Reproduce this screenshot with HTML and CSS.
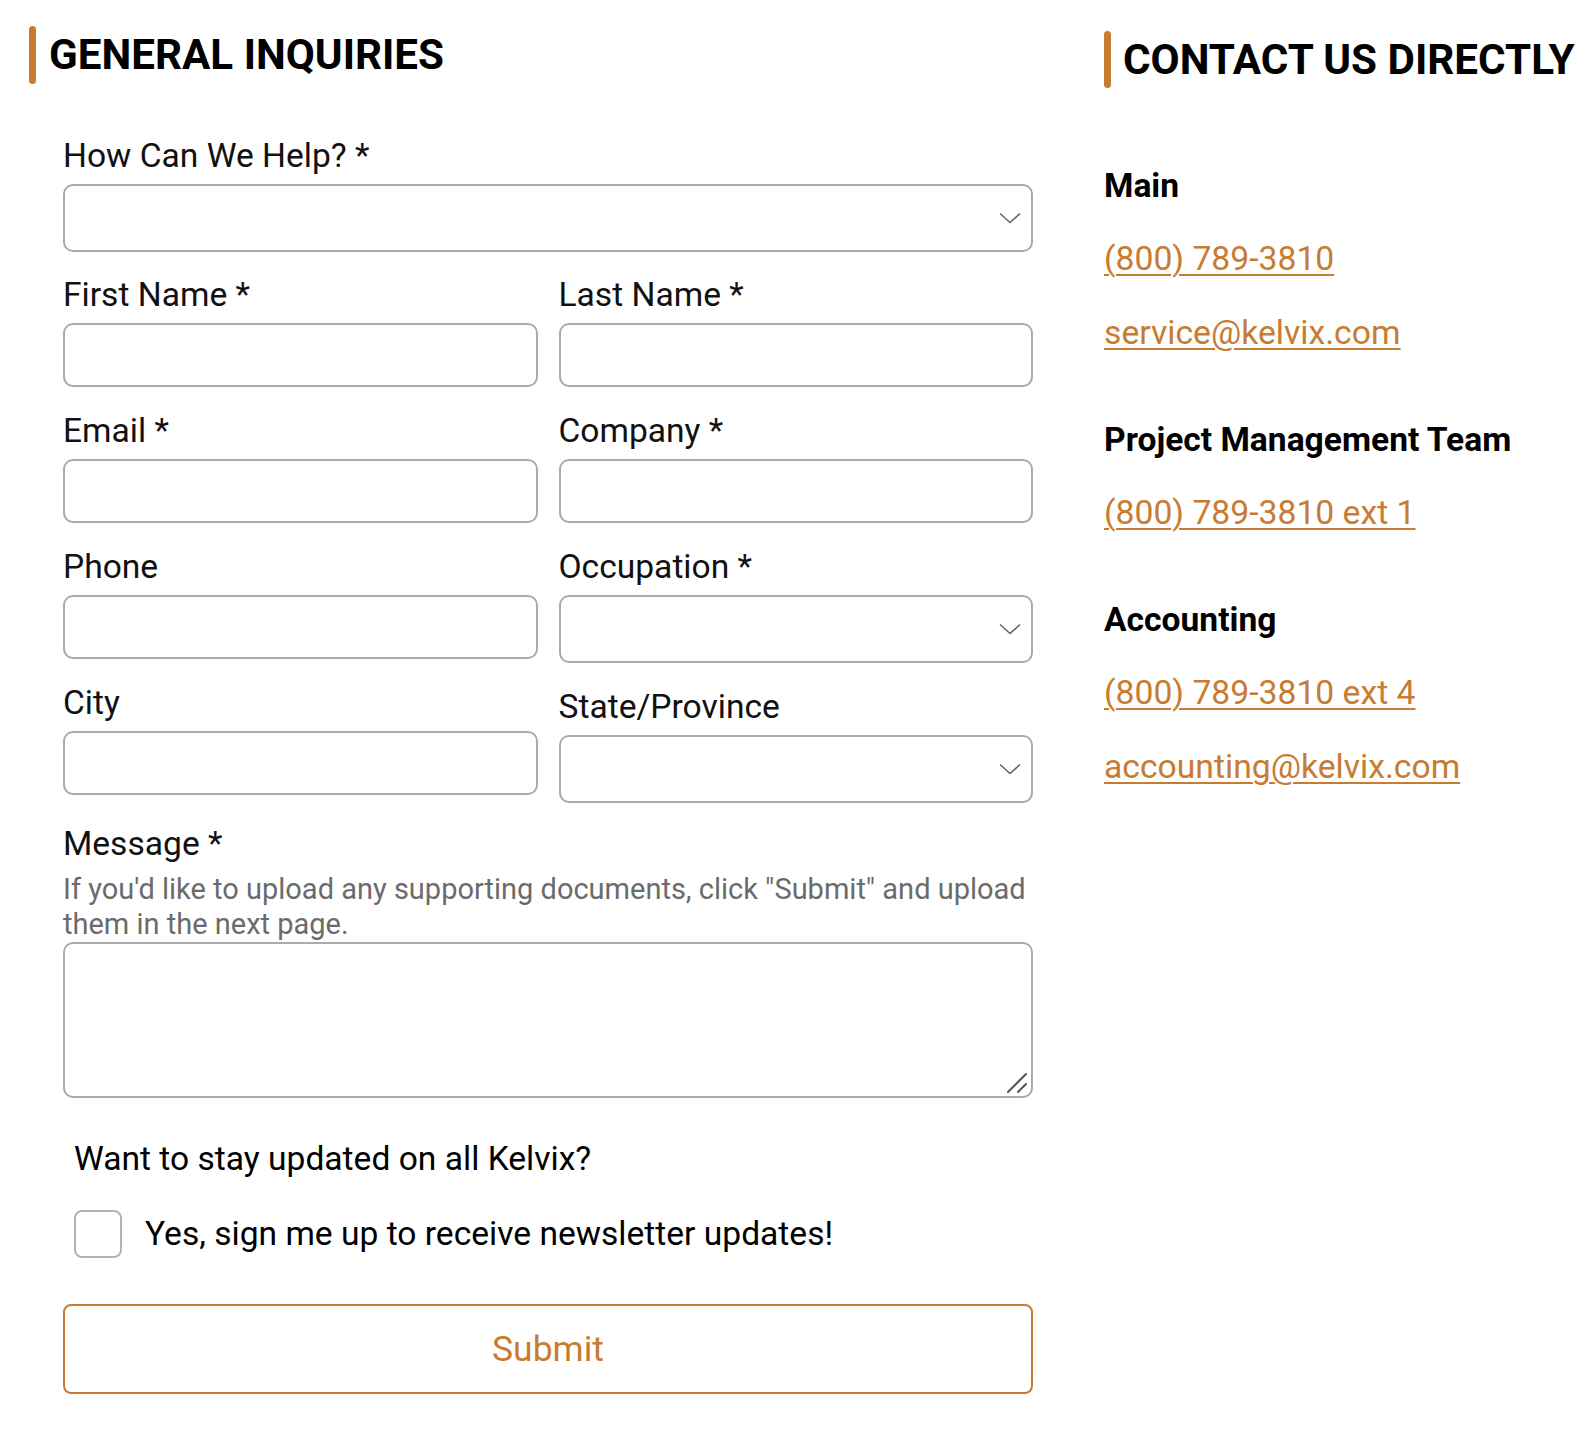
FILE: index.html
```html
<!DOCTYPE html>
<html lang="en">
<head>
<meta charset="utf-8">
<title>Contact Kelvix</title>
<link rel="stylesheet" href="styles.css">
</head>
<body>
<div class="page">
  <section class="inquiries">
    <h2 class="section-title"><span class="bar"></span><span>GENERAL INQUIRIES</span></h2>
    <form class="form">
      <div class="field">
        <label class="label">How Can We Help? *</label>
        <div class="select-wrap">
          <select class="select"><option></option></select>
          <svg class="chevron" width="22" height="12" viewBox="0 0 22 12"><path d="M1 1.5 L11 10.5 L21 1.5" fill="none" stroke="#666" stroke-width="1.6"/></svg>
        </div>
      </div>
      <div class="cols">
        <div class="col">
          <div class="field"><label class="label">First Name *</label><input class="input" type="text"></div>
          <div class="field"><label class="label">Email *</label><input class="input" type="text"></div>
          <div class="field"><label class="label">Phone</label><input class="input" type="text"></div>
          <div class="field"><label class="label">City</label><input class="input" type="text"></div>
        </div>
        <div class="col">
          <div class="field"><label class="label">Last Name *</label><input class="input" type="text"></div>
          <div class="field"><label class="label">Company *</label><input class="input" type="text"></div>
          <div class="field">
            <label class="label">Occupation *</label>
            <div class="select-wrap">
              <select class="select"><option></option></select>
              <svg class="chevron" width="22" height="12" viewBox="0 0 22 12"><path d="M1 1.5 L11 10.5 L21 1.5" fill="none" stroke="#666" stroke-width="1.6"/></svg>
            </div>
          </div>
          <div class="field">
            <label class="label">State/Province</label>
            <div class="select-wrap">
              <select class="select"><option></option></select>
              <svg class="chevron" width="22" height="12" viewBox="0 0 22 12"><path d="M1 1.5 L11 10.5 L21 1.5" fill="none" stroke="#666" stroke-width="1.6"/></svg>
            </div>
          </div>
        </div>
      </div>
      <div class="field message">
        <label class="label label-tight">Message *</label>
        <p class="hint">If you'd like to upload any supporting documents, click "Submit" and upload them in the next page.</p>
        <div class="textarea-wrap">
          <textarea class="textarea"></textarea>
          <svg class="resizer" width="22" height="22" viewBox="0 0 22 22"><path d="M2 20 L20 2 M12 20 L20 12" fill="none" stroke="#555" stroke-width="2" stroke-linecap="round"/></svg>
        </div>
      </div>
      <p class="newsletter-q">Want to stay updated on all Kelvix?</p>
      <label class="check-row"><input class="checkbox" type="checkbox"><span>Yes, sign me up to receive newsletter updates!</span></label>
      <button class="submit" type="button">Submit</button>
    </form>
  </section>
  <aside class="contact">
    <h2 class="section-title contact-title"><span class="bar"></span><span>CONTACT US DIRECTLY</span></h2>
    <div class="dept first">
      <h3 class="dept-name">Main</h3>
      <a class="link" href="#">(800) 789-3810</a>
      <a class="link" href="#">service@kelvix.com</a>
    </div>
    <div class="dept">
      <h3 class="dept-name">Project Management Team</h3>
      <a class="link" href="#">(800) 789-3810 ext 1</a>
    </div>
    <div class="dept">
      <h3 class="dept-name">Accounting</h3>
      <a class="link" href="#">(800) 789-3810 ext 4</a>
      <a class="link" href="#">accounting@kelvix.com</a>
    </div>
  </aside>
</div>
</body>
</html>
```
FILE: styles.css
```css
* { box-sizing: border-box; }
body {
  margin: 0;
  background: #fff;
  color: #000;
  font-family: Roboto, "Liberation Sans", Arial, sans-serif;
}
.page {
  display: flex;
  align-items: flex-start;
}
.inquiries {
  width: 1033px;
  padding-left: 29px;
  padding-top: 26px;
}
.section-title {
  margin: 0;
  display: flex;
  align-items: center;
  gap: 13px;
  height: 58px;
  font-size: 42.2px;
  line-height: 58px;
  font-weight: 700;
  color: #000;
}
.bar {
  width: 7px;
  height: 58px;
  background: #c77c32;
  border-radius: 4px;
  flex: none;
}
.form {
  margin-left: 34px;
  width: 970px;
  margin-top: 52px;
  display: flex;
  flex-direction: column;
}
.field {
  display: flex;
  flex-direction: column;
}
.label {
  font-size: 33.6px;
  line-height: 40px;
  margin-bottom: 8px;
  color: #111;
}
.input {
  height: 64px;
  border: 2px solid #ababab;
  border-radius: 10px;
  background: #fff;
  font: inherit;
  width: 100%;
}
.select-wrap {
  position: relative;
  height: 68px;
}
.select {
  appearance: none;
  -webkit-appearance: none;
  width: 100%;
  height: 68px;
  border: 2px solid #ababab;
  border-radius: 10px;
  background: #fff;
  font: inherit;
}
.chevron {
  position: absolute;
  right: 12px;
  top: 28px;
  pointer-events: none;
}
.cols {
  display: grid;
  grid-template-columns: 1fr 1fr;
  column-gap: 21px;
  margin-top: 23px;
  align-items: start;
}
.col {
  display: flex;
  flex-direction: column;
  gap: 24px;
}
.message {
  margin-top: 21px;
}
.label-tight {
  margin-bottom: 0;
}
.hint {
  margin: 8px 0 0;
  font-size: 29px;
  line-height: 35px;
  color: #6b6b6b;
}
.textarea-wrap {
  position: relative;
  height: 156px;
}
.textarea {
  display: block;
  height: 156px;
  border: 2px solid #ababab;
  border-radius: 10px;
  resize: none;
  font: inherit;
  width: 100%;
}
.resizer {
  position: absolute;
  right: 5px;
  bottom: 4px;
  pointer-events: none;
}
.newsletter-q {
  margin: 41px 0 0 11px;
  font-size: 33.6px;
  line-height: 40px;
}
.check-row {
  margin: 31px 0 0 11px;
  display: flex;
  align-items: center;
  gap: 23px;
  font-size: 33.6px;
  line-height: 40px;
}
.checkbox {
  appearance: none;
  -webkit-appearance: none;
  margin: 0;
  width: 48px;
  height: 48px;
  border: 2px solid #b3b3b3;
  border-radius: 8px;
  background: #fff;
  flex: none;
}
.submit {
  margin-top: 46px;
  height: 90px;
  width: 100%;
  border: 2px solid #c77c32;
  border-radius: 8px;
  background: #fff;
  color: #c77c32;
  font-family: inherit;
  font-size: 35.5px;
}
.contact {
  margin-left: 71px;
  padding-top: 31px;
  display: flex;
  flex-direction: column;
}
.contact-title {
  height: 57px;
  gap: 12px;
}
.contact-title .bar {
  height: 57px;
}
.dept {
  display: flex;
  flex-direction: column;
  align-items: flex-start;
  margin-top: 67px;
}
.dept.first {
  margin-top: 78px;
}
.dept-name {
  margin: 0;
  font-size: 33.6px;
  line-height: 40px;
  font-weight: 700;
}
.link {
  margin-top: 34px;
  font-size: 33.7px;
  line-height: 40px;
  color: #c77c32;
  text-decoration: underline;
  text-decoration-thickness: 2px;
  text-underline-offset: 4px;
}
.dept-name + .link {
  margin-top: 33px;
}
```
